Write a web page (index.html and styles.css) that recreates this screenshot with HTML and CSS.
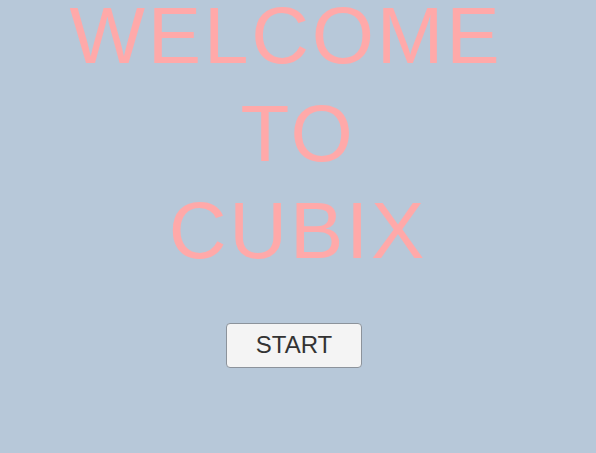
FILE: index.html
```html
<!DOCTYPE html>
<html lang="en">
<head>
<meta charset="utf-8">
<title>Cubix</title>
<link rel="stylesheet" href="styles.css">
</head>
<body>
<main class="screen">
  <h1 class="title">
    <span class="line line-first">WELCOME</span>
    <span class="line">TO</span>
    <span class="line">CUBIX</span>
  </h1>
  <button class="start" type="button">START</button>
</main>
</body>
</html>
```
FILE: styles.css
```css
html, body {
  margin: 0;
  padding: 0;
  height: 100%;
  overflow: hidden;
}
body {
  background: #b7c8d9;
  font-family: "Liberation Sans", Arial, sans-serif;
}
.screen {
  display: flex;
  flex-direction: column;
  align-items: center;
}
.title {
  margin: -13px 0 0;
  font-size: 80px;
  font-weight: normal;
  line-height: 97.5px;
  letter-spacing: 2.8px;
  color: #ffa9a9;
  text-align: center;
}
.line {
  display: block;
  white-space: nowrap;
}
.line-first {
  padding-right: 24px;
}
.start {
  margin-top: 43px;
  margin-left: -8px;
  width: 136px;
  height: 45px;
  background: #f4f4f4;
  border: 1px solid #8c939b;
  border-radius: 4px;
  font-family: "Liberation Sans", Arial, sans-serif;
  font-size: 24px;
  color: #333333;
  padding: 0;
}
```
